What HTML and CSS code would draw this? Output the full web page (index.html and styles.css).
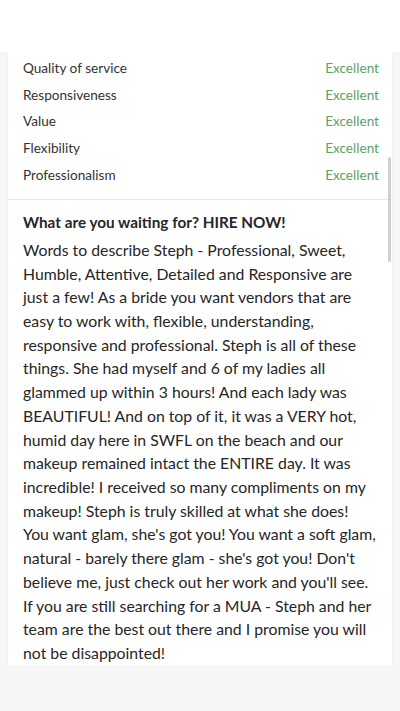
FILE: index.html
```html
<!DOCTYPE html>
<html lang="en">
<head>
    <meta charset="UTF-8">
    <meta name="viewport" content="width=device-width, initial-scale=1.0">
    <title>Review</title>
    <link rel="stylesheet" href="styles.css">
</head>
<body>
    <div class="topbar"></div>
    <div class="card">
        <!-- Ratings -->
        <div class="ratings">
            <div class="rating-row"><span>Quality of service</span><span class="score">Excellent</span></div>
            <div class="rating-row"><span>Responsiveness</span><span class="score">Excellent</span></div>
            <div class="rating-row"><span>Value</span><span class="score">Excellent</span></div>
            <div class="rating-row"><span>Flexibility</span><span class="score">Excellent</span></div>
            <div class="rating-row"><span>Professionalism</span><span class="score">Excellent</span></div>
        </div>
        <!-- Review -->
        <div class="review">
            <h3>What are you waiting for? HIRE NOW!</h3>
            <p>Words to describe Steph - Professional, Sweet, Humble, Attentive, Detailed and Responsive are just a few! As a bride you want vendors that are easy to work with, flexible, understanding, responsive and professional. Steph is all of these things. She had myself and 6 of my ladies all glammed up within 3 hours! And each lady was BEAUTIFUL! And on top of it, it was a VERY hot, humid day here in SWFL on the beach and our makeup remained intact the ENTIRE day. It was incredible! I received so many compliments on my makeup! Steph is truly skilled at what she does! You want glam, she's got you! You want a soft glam, natural - barely there glam - she's got you! Don't believe me, just check out her work and you'll see. If you are still searching for a MUA - Steph and her team are the best out there and I promise you will not be disappointed!</p>
        </div>
        <div class="scrollbar"></div>
    </div>
</body>
</html>
```
FILE: styles.css
```css
body {
    margin: 0;
    background-color: #f6f6f6;
    font-family: "Lato", "Open Sans", sans-serif;
    color: #262626;
}
.topbar {
    height: 52px;
    background-color: #fff;
}
.card {
    position: relative;
    margin: 0 8px;
    background-color: #fff;
    box-shadow: 0 1px 2px rgba(0, 0, 0, 0.06);
}
.ratings {
    padding: 3px 13px 11px 15px;
    border-bottom: 1px solid #e8e8e8;
}
.rating-row {
    display: flex;
    justify-content: space-between;
    align-items: center;
    height: 26.6px;
    font-size: 13.6px;
    color: #333;
}
.rating-row .score {
    color: #5f9f68;
}
.review {
    padding: 12px 15px 0 15px;
}
.review h3 {
    margin: 0 0 6px;
    font-size: 15.3px;
    font-weight: 700;
    line-height: 20px;
}
.review p {
    margin: 0;
    font-size: 15.8px;
    line-height: 23.7px;
}
.scrollbar {
    position: absolute;
    top: 105px;
    right: 1px;
    width: 3px;
    height: 105px;
    background-color: #cfcfcf;
    border-radius: 2px;
}
```
